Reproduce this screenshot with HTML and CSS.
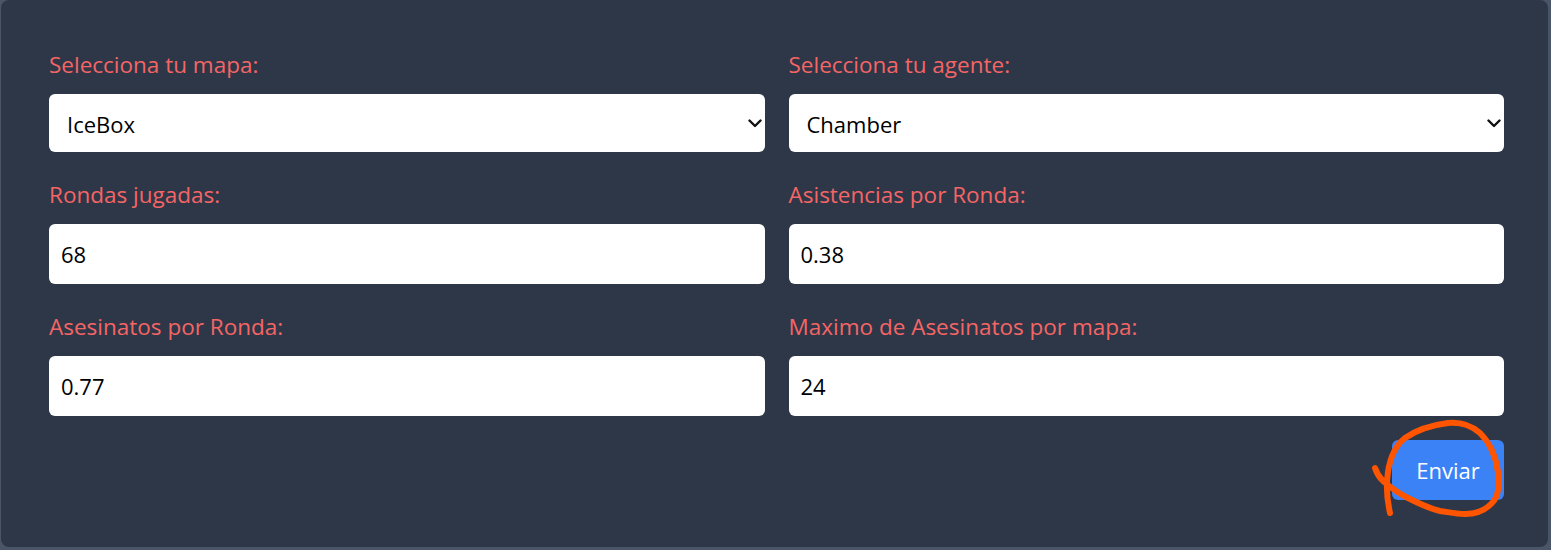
FILE: index.html
```html
<!DOCTYPE html>
<html lang="es">
<head>
<meta charset="utf-8">
<title>Formulario</title>
<link rel="stylesheet" href="styles.css">
</head>
<body>
<main class="panel">
  <form class="form">
    <div class="field">
      <label class="label" for="mapa">Selecciona tu mapa:</label>
      <div class="select-wrap">
        <select id="mapa" class="control select"><option>IceBox</option></select>
        <svg class="chevron" viewBox="0 0 14 9" width="14" height="9"><path d="M1.5 1.5 L7 7 L12.5 1.5" fill="none" stroke="#111" stroke-width="2.4" stroke-linecap="round" stroke-linejoin="round"/></svg>
      </div>
    </div>
    <div class="field">
      <label class="label" for="agente">Selecciona tu agente:</label>
      <div class="select-wrap">
        <select id="agente" class="control select"><option>Chamber</option></select>
        <svg class="chevron" viewBox="0 0 14 9" width="14" height="9"><path d="M1.5 1.5 L7 7 L12.5 1.5" fill="none" stroke="#111" stroke-width="2.4" stroke-linecap="round" stroke-linejoin="round"/></svg>
      </div>
    </div>
    <div class="field">
      <label class="label" for="rondas">Rondas jugadas:</label>
      <input id="rondas" class="control input" type="text" value="68">
    </div>
    <div class="field">
      <label class="label" for="asist">Asistencias por Ronda:</label>
      <input id="asist" class="control input" type="text" value="0.38">
    </div>
    <div class="field">
      <label class="label" for="asesin">Asesinatos por Ronda:</label>
      <input id="asesin" class="control input" type="text" value="0.77">
    </div>
    <div class="field">
      <label class="label" for="maximo">Maximo de Asesinatos por mapa:</label>
      <input id="maximo" class="control input" type="text" value="24">
    </div>
    <div class="actions">
      <button type="button" class="button">Enviar</button>
    </div>
  </form>
</main>
<svg class="annotation" viewBox="0 0 1551 550" width="1551" height="550">
  <path d="M1390 513 C1387 500 1386 485 1388 472 C1390 458 1396 445 1405 438 C1418 429 1432 425 1448 423 C1460 422 1472 426 1480 433 C1490 443 1496 458 1498 472 C1500 488 1497 499 1491 504 C1484 511 1475 514 1465 514 C1455 514 1448 512 1440 511 C1430 509 1420 504 1408 498 C1398 493 1390 487 1383 481 C1378 476 1376 471 1375 468" fill="none" stroke="#ff5400" stroke-width="6" stroke-linecap="round" stroke-linejoin="round"/>
</svg>
</body>
</html>
```
FILE: styles.css
```css
html, body {
  margin: 0;
  padding: 0;
}
body {
  background: #4a5568;
  width: 1551px;
  height: 550px;
  overflow: hidden;
  position: relative;
  font-family: "Open Sans", "Noto Sans", "Liberation Sans", sans-serif;
}
.panel {
  margin: 0 3px 0 1px;
  height: 547px;
  box-sizing: border-box;
  background: #2d3748;
  border-radius: 8px;
  padding: 50px 44px 47px 48px;
}
.form {
  display: grid;
  grid-template-columns: 1fr 1fr;
  column-gap: 24px;
  row-gap: 28px;
}
.field {
  display: flex;
  flex-direction: column;
}
.label {
  color: #f56565;
  font-size: 22.5px;
  line-height: 30px;
  margin-bottom: 14px;
}
.control {
  box-sizing: border-box;
  width: 100%;
  border: none;
  border-radius: 6px;
  background: #fff;
  color: #000;
  font-family: inherit;
  font-size: 22px;
  outline: none;
  margin: 0;
}
.select-wrap {
  position: relative;
}
.select {
  -webkit-appearance: none;
  appearance: none;
  height: 58px;
  padding: 2px 30px 0 18px;
}
.chevron {
  position: absolute;
  right: 3px;
  top: 25px;
  pointer-events: none;
}
.input {
  height: 60px;
  padding: 0 12px;
}
.actions {
  grid-column: 1 / -1;
  display: flex;
  justify-content: flex-end;
  margin-top: -4px;
}
.button {
  height: 60px;
  width: 112px;
  border: none;
  border-radius: 6px;
  background: #3b82f6;
  color: #fff;
  font-family: inherit;
  font-size: 22px;
  padding: 0;
}
.annotation {
  position: absolute;
  left: 0;
  top: 0;
  pointer-events: none;
}
```
